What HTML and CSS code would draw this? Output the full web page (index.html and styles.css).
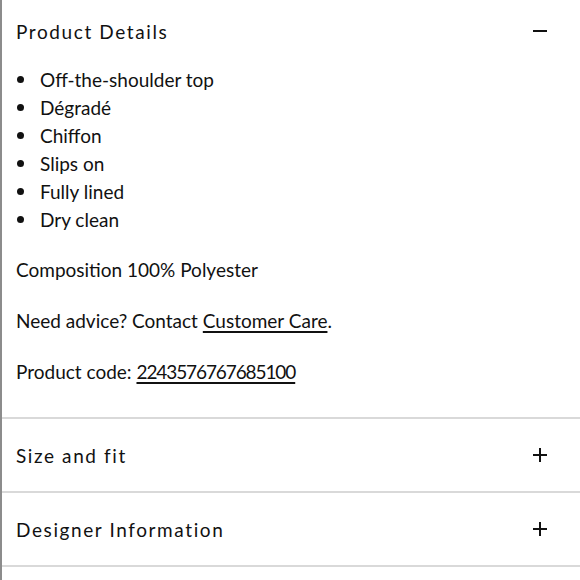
FILE: index.html
```html
<!DOCTYPE html>
<html>
<head>
<meta charset="utf-8">
<link rel="stylesheet" href="styles.css">
</head>
<body>
<div class="panel">
  <section class="acc acc-open">
    <div class="acc-head first">
      <span class="acc-title">Product Details</span>
      <span class="icon minus"></span>
    </div>
    <div class="acc-body">
      <ul class="list">
        <li>Off-the-shoulder top</li>
        <li>Dégradé</li>
        <li>Chiffon</li>
        <li>Slips on</li>
        <li>Fully lined</li>
        <li>Dry clean</li>
      </ul>
      <p>Composition 100% Polyester</p>
      <p>Need advice? Contact <a href="#">Customer Care</a>.</p>
      <p>Product code: <a href="#" class="code">2243576767685100</a></p>
    </div>
  </section>
  <section class="acc">
    <div class="acc-head">
      <span class="acc-title">Size and fit</span>
      <span class="icon plus"></span>
    </div>
  </section>
  <section class="acc">
    <div class="acc-head">
      <span class="acc-title">Designer Information</span>
      <span class="icon plus"></span>
    </div>
  </section>
</div>
</body>
</html>
```
FILE: styles.css
```css
* { box-sizing: border-box; }
html, body { margin: 0; padding: 0; background: #fff; }
body {
  font-family: "Lato", "DejaVu Sans", sans-serif;
  color: #111;
  font-size: 19px;
}
.panel {
  border-left: 2px solid #8c8c8c;
  height: 580px;
  overflow: hidden;
}
.acc { border-bottom: 2px solid #d9d9d9; }
.acc-head {
  display: flex;
  align-items: center;
  justify-content: space-between;
  height: 72px;
  padding: 0 33px 0 14px;
}
.acc-head.first { height: 62px; }
.acc-title {
  font-size: 19px;
  letter-spacing: 1.6px;
}
.icon { position: relative; width: 14px; height: 14px; }
.icon::before, .icon::after {
  content: "";
  position: absolute;
  background: #111;
}
.icon::before { left: 0; right: 0; top: 6px; height: 2px; }
.plus::after { top: 0; bottom: 0; left: 6px; width: 2px; }
.acc-body { padding: 4px 20px 31px 14px; }
.list { list-style: none; margin: 0 0 22px; padding: 0; }
.list li {
  position: relative;
  line-height: 28px;
  padding-left: 24px;
}
.list li::before {
  content: "";
  position: absolute;
  left: 1px;
  top: 10px;
  width: 7px;
  height: 7px;
  border-radius: 50%;
  background: #111;
}
.acc-body p { margin: 0 0 23px; line-height: 28px; }
.acc-body p:last-child { margin-bottom: 0; }
.acc-body a {
  color: #111;
  text-decoration: underline;
  text-decoration-thickness: 1.5px;
  text-underline-offset: 3px;
}
.acc-body a.code { letter-spacing: -1.1px; }
```
